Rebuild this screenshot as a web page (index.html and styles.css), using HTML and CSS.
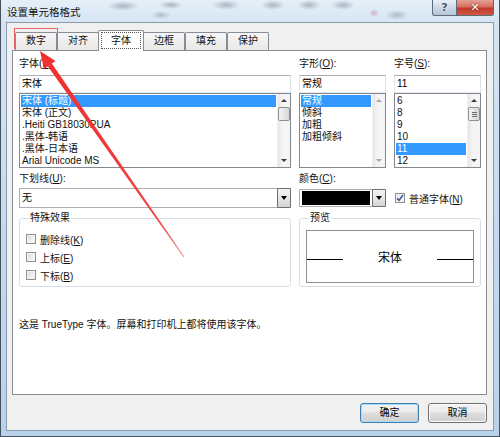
FILE: index.html
```html
<!DOCTYPE html>
<html lang="zh-CN">
<head>
<meta charset="utf-8">
<title>设置单元格格式</title>
<link rel="stylesheet" href="styles.css">
</head>
<body>
<div class="window">
  <div class="titlebar">
    <span class="title">设置单元格格式</span>
    <div class="caption">
      <span class="cap-btn help">?</span>
      <span class="cap-btn close">✕</span>
    </div>
  </div>
  <div class="client">
    <div class="tabs">
      <span class="tab">数字</span>
      <span class="tab">对齐</span>
      <span class="tab active"><span class="focus">字体</span></span>
      <span class="tab">边框</span>
      <span class="tab">填充</span>
      <span class="tab">保护</span>
    </div>
    <div class="panel">
      <div class="grid">
        <div class="label">字体(<u>F</u>):</div>
        <div class="label">字形(<u>O</u>):</div>
        <div class="label">字号(<u>S</u>):</div>

        <div class="input">宋体</div>
        <div class="input">常规</div>
        <div class="input">11</div>

        <div class="list">
          <div class="items">
            <div class="item sel">宋体 (标题)</div>
            <div class="item">宋体 (正文)</div>
            <div class="item">.Heiti GB18030PUA</div>
            <div class="item">.黑体-韩语</div>
            <div class="item">.黑体-日本语</div>
            <div class="item">Arial Unicode MS</div>
          </div>
          <div class="vscroll">
            <span class="sb-btn"><span class="tri-up"></span></span>
            <span class="thumb"></span>
            <span class="sb-fill"></span>
            <span class="sb-btn"><span class="tri-down"></span></span>
          </div>
        </div>
        <div class="list">
          <div class="items">
            <div class="item sel narrow">常规</div>
            <div class="item">倾斜</div>
            <div class="item">加粗</div>
            <div class="item">加粗倾斜</div>
          </div>
          <div class="vscroll disabled">
            <span class="sb-btn"><span class="tri-up"></span></span>
            <span class="sb-fill"></span>
            <span class="sb-btn"><span class="tri-down"></span></span>
          </div>
        </div>
        <div class="list">
          <div class="items">
            <div class="item">6</div>
            <div class="item">8</div>
            <div class="item">9</div>
            <div class="item">10</div>
            <div class="item sel">11</div>
            <div class="item">12</div>
          </div>
          <div class="vscroll">
            <span class="sb-btn"><span class="tri-up"></span></span>
            <span class="thumb grip"><i></i><i></i><i></i></span>
            <span class="sb-fill"></span>
            <span class="sb-btn"><span class="tri-down"></span></span>
          </div>
        </div>

        <div class="label lbl2">下划线(<u>U</u>):</div>
        <div class="label lbl2">颜色(<u>C</u>):</div>
        <div class="label lbl2"></div>

        <div class="combo">
          <span class="combo-text">无</span>
          <span class="dd"><span class="tri-down"></span></span>
        </div>
        <div class="combo color">
          <span class="swatch"></span>
          <span class="dd"><span class="tri-down"></span></span>
        </div>
        <div class="check-row">
          <span class="cb checked"><svg width="8" height="8" viewBox="0 0 8 8"><path d="M1 4.2 L3 6.5 L7 1" fill="none" stroke="#3d4f8a" stroke-width="1.4"/></svg></span>
          <span>普通字体(<u>N</u>)</span>
        </div>

        <div class="group effects">
          <div class="legend">特殊效果</div>
          <div class="check-row"><span class="cb"></span><span>删除线(<u>K</u>)</span></div>
          <div class="check-row"><span class="cb"></span><span>上标(<u>E</u>)</span></div>
          <div class="check-row"><span class="cb"></span><span>下标(<u>B</u>)</span></div>
        </div>
        <div class="group preview">
          <div class="legend">预览</div>
          <div class="preview-box">
            <span class="pline"></span>
            <span class="ptext">宋体</span>
            <span class="pline"></span>
          </div>
        </div>
      </div>
      <div class="note">这是 TrueType 字体。屏幕和打印机上都将使用该字体。</div>
    </div>
    <div class="buttons">
      <span class="btn default">确定</span>
      <span class="btn">取消</span>
    </div>
  </div>
</div>
<svg class="annot" width="500" height="437" viewBox="0 0 500 437">
  <defs>
    <linearGradient id="shaft" gradientUnits="userSpaceOnUse" x1="50" y1="65" x2="184" y2="257">
      <stop offset="0" stop-color="#ee3030"/>
      <stop offset="0.8" stop-color="#f04040"/>
      <stop offset="1" stop-color="#f28a8a"/>
    </linearGradient>
  </defs>
  <rect x="14.5" y="28.5" width="43" height="20" fill="none" stroke="#e46464" stroke-width="1"/>
  <polygon points="51.85,63.46 184.4,256.7 183.6,257.3 47.75,66.34" fill="url(#shaft)"/>
  <polygon points="40,51 55.5,60.9 44.1,68.9" fill="#ee3030"/>
</svg>
</body>
</html>
```

FILE: styles.css
```css
* { box-sizing: border-box; }

html, body {
  margin: 0;
  padding: 0;
}

body {
  width: 500px;
  height: 437px;
  overflow: hidden;
  position: relative;
  font-family: "Liberation Sans", "Noto Sans CJK SC", sans-serif;
  font-size: 10px;
  color: #000;
  background: #c4d9ef;
}

u { text-decoration: underline; }

.window {
  width: 500px;
  height: 437px;
  display: flex;
  flex-direction: column;
  border: 1px solid #46525e;
  border-top: none;
  background: linear-gradient(to bottom, #d7e6f5 0%, #c2d8ef 60%, #b9d2ec 100%);
}

/* ---------- title bar ---------- */
.titlebar {
  height: 22px;
  flex: none;
  display: flex;
  align-items: flex-start;
  background:
    radial-gradient(ellipse 16px 5px at 122px 6px, rgba(70,80,95,.35), transparent),
    radial-gradient(ellipse 12px 4px at 170px 5px, rgba(70,80,95,.35), transparent),
    radial-gradient(ellipse 14px 5px at 225px 5px, rgba(70,80,95,.35), transparent),
    radial-gradient(ellipse 10px 4px at 160px 15px, rgba(70,80,95,.3), transparent),
    radial-gradient(ellipse 12px 5px at 272px 5px, rgba(70,80,95,.35), transparent),
    radial-gradient(ellipse 12px 5px at 308px 5px, rgba(70,80,95,.35), transparent),
    radial-gradient(ellipse 12px 5px at 342px 5px, rgba(70,80,95,.35), transparent),
    radial-gradient(ellipse 12px 5px at 396px 15px, rgba(70,80,95,.3), transparent),
    radial-gradient(ellipse 5px 4px at 373px 13px, rgba(200,60,90,.35), transparent),
    linear-gradient(to bottom, #e6eff8, #d6e5f4);
}

.title {
  padding: 5px 0 0 6px;
  line-height: 14px;
  font-size: 10.5px;
  color: #111;
}

.caption {
  margin-left: auto;
  margin-right: 5px;
  display: flex;
}

.cap-btn {
  height: 16px;
  display: flex;
  align-items: center;
  justify-content: center;
  border: 1px solid #5c6b7c;
  border-top: none;
}

.help {
  width: 24px;
  border-right: none;
  border-radius: 0 0 0 3px;
  background: linear-gradient(to bottom, #e8eef5, #ccd8e5 50%, #b8c8da);
  color: #4a5563;
  font-weight: bold;
  font-size: 11px;
  font-family: "DejaVu Sans", sans-serif;
  text-shadow: 0 0 2px #fff;
}

.close {
  width: 38px;
  border-radius: 0 0 3px 0;
  background: linear-gradient(to bottom, #e4a195, #d66f60 45%, #c2392a 55%, #d05a45);
  color: #fff;
  font-size: 11px;
  font-weight: bold;
  font-family: "DejaVu Sans", sans-serif;
  text-shadow: 0 0 2px #5a1a14;
}

/* ---------- client area ---------- */
.client {
  flex: 1;
  margin: 0 5px 5px 5px;
  border: 1px solid #8a9bab;
  background: #f0f0f0;
  display: flex;
  flex-direction: column;
  padding-top: 7px;
}

.tabs {
  display: flex;
  align-items: flex-end;
  height: 21px;
  padding-left: 8px;
  margin-bottom: -1px;
  position: relative;
  z-index: 1;
}

.tab {
  height: 18px;
  margin-bottom: 1px;
  padding: 0 10px;
  border: 1px solid #898c95;
  border-bottom: none;
  border-radius: 2px 2px 0 0;
  line-height: 16px;
  background: linear-gradient(to bottom, #f6f6f6, #e8e8e8);
  color: #111;
}

.tab.active {
  height: 21px;
  margin: 0 -1px;
  padding: 1px 2px 0;
  background: #fff;
  position: relative;
  z-index: 2;
}

.focus {
  display: block;
  padding: 0 9px;
  line-height: 15px;
  border: 1px dotted #555;
}

.panel {
  height: 345px;
  margin: 0 6px 0 5px;
  border: 1px solid #898c95;
  background: #fff;
  padding: 6px 5px 0 6px;
}

.grid {
  display: grid;
  grid-template-columns: 272px 87px 87px;
  column-gap: 8px;
}

.label {
  line-height: 14px;
  height: 14px;
  margin-bottom: 4px;
  color: #111;
}

.lbl2 {
  margin-top: 4px;
  margin-bottom: 2px;
}

.input {
  height: 18px;
  border: 1px solid #abadb3;
  border-color: #abadb3 #dbdfe6 #e3e9ef #e2e3ea;
  line-height: 16px;
  padding-left: 2px;
}

.list {
  height: 75px;
  border: 1px solid #828790;
  display: flex;
}

.items {
  flex: 1;
  padding: 1px;
  min-width: 0;
}

.item {
  height: 12px;
  line-height: 12px;
  padding-left: 1px;
  white-space: nowrap;
  overflow: hidden;
  color: #111;
}

.item.sel {
  background: #3399ff;
  color: #fff;
}

.vscroll {
  width: 13px;
  flex: none;
  display: flex;
  flex-direction: column;
  background: linear-gradient(to right, #e6e6e6, #f5f5f5 40%, #f5f5f5);
  border-left: 1px solid #f0f0f0;
}

.sb-btn {
  height: 13px;
  display: flex;
  align-items: center;
  justify-content: center;
}

.sb-fill { flex: 1; }

.tri-up, .tri-down {
  width: 0;
  height: 0;
  border-left: 3px solid transparent;
  border-right: 3px solid transparent;
}

.tri-up { border-bottom: 3px solid #3b3b3b; }
.tri-down { border-top: 3px solid #3b3b3b; }

.disabled .tri-up { border-bottom-color: #a8a8a8; }
.disabled .tri-down { border-top-color: #a8a8a8; }

.thumb {
  height: 14px;
  margin: 0 0 0 0;
  border: 1px solid #8f8f8f;
  border-radius: 2px;
  background: linear-gradient(to right, #f4f4f4, #e4e4e4 50%, #d6d6d6);
  display: flex;
  flex-direction: column;
  align-items: center;
  justify-content: center;
  gap: 1px;
}

.thumb i {
  display: block;
  width: 5px;
  height: 1px;
  background: #6d6d6d;
}

.combo {
  height: 20px;
  border: 1px solid #abadb3;
  display: flex;
  align-items: stretch;
  background: #fff;
}

.combo-text {
  flex: 1;
  padding-left: 2px;
  line-height: 18px;
}

.dd {
  width: 14px;
  margin: -1px -1px -1px auto;
  border: 1px solid #707070;
  border-radius: 1px;
  background: linear-gradient(to bottom, #f4f4f4, #e6e6e6 50%, #d4d4d4);
  display: flex;
  align-items: center;
  justify-content: center;
}

.dd .tri-down {
  border-left-width: 3px;
  border-right-width: 3px;
  border-top: 4px solid #000;
}

.combo.color {
  height: 18px;
  align-self: center;
  padding: 1px 0 1px 2px;
  border-color: #abadb3;
}

.swatch {
  width: 68px;
  background: #000;
}

.combo.color .dd {
  margin: -2px -1px -2px 2px;
}

.check-row {
  display: flex;
  align-items: center;
  gap: 4px;
  height: 18px;
  color: #111;
}

.grid > .check-row {
  height: 20px;
  padding-left: 1px;
}

.cb {
  width: 10px;
  height: 10px;
  flex: none;
  border: 1px solid #8e8f8f;
  background: linear-gradient(135deg, #d8d8d8, #f4f4f4 70%, #fff);
  box-shadow: inset 0 0 0 1px #f4f4f4;
  display: flex;
  align-items: center;
  justify-content: center;
}

.cb.checked {
  background: linear-gradient(135deg, #dfe6f0, #f6f8fb);
}

.group {
  margin-top: 10px;
  height: 69px;
  border: 1px solid #d5dfe5;
  border-radius: 3px;
}

.legend {
  width: max-content;
  margin: -8px 0 5px 3px;
  padding: 0 1px;
  line-height: 14px;
  background: #fff;
  color: #111;
}

.effects {
  padding-left: 6px;
}

.preview {
  grid-column: span 2;
  padding: 0 6px;
}

.preview-box {
  height: 53px;
  border: 1px solid #8f8f8f;
  display: flex;
  align-items: center;
}

.pline {
  width: 36px;
  height: 1px;
  background: #000;
  margin-top: 6px;
}

.ptext {
  flex: 1;
  text-align: center;
  font-size: 12px;
}

.note {
  margin-top: 31px;
  line-height: 14px;
  color: #111;
}

.buttons {
  display: flex;
  justify-content: flex-end;
  gap: 9px;
  margin: 8px 6px 0 0;
}

.btn {
  width: 59px;
  height: 20px;
  border: 1px solid #707070;
  border-radius: 3px;
  background: linear-gradient(to bottom, #f3f3f3, #ebebeb 45%, #dddddd 50%, #d0d0d0);
  text-align: center;
  line-height: 18px;
  box-shadow: inset 0 0 0 1px #fbfbfb;
}

.btn.default {
  border-color: #3c7fb1;
  box-shadow: inset 0 0 0 1px #a6dcf5;
}

.annot {
  position: absolute;
  left: 0;
  top: 0;
  pointer-events: none;
}
```
